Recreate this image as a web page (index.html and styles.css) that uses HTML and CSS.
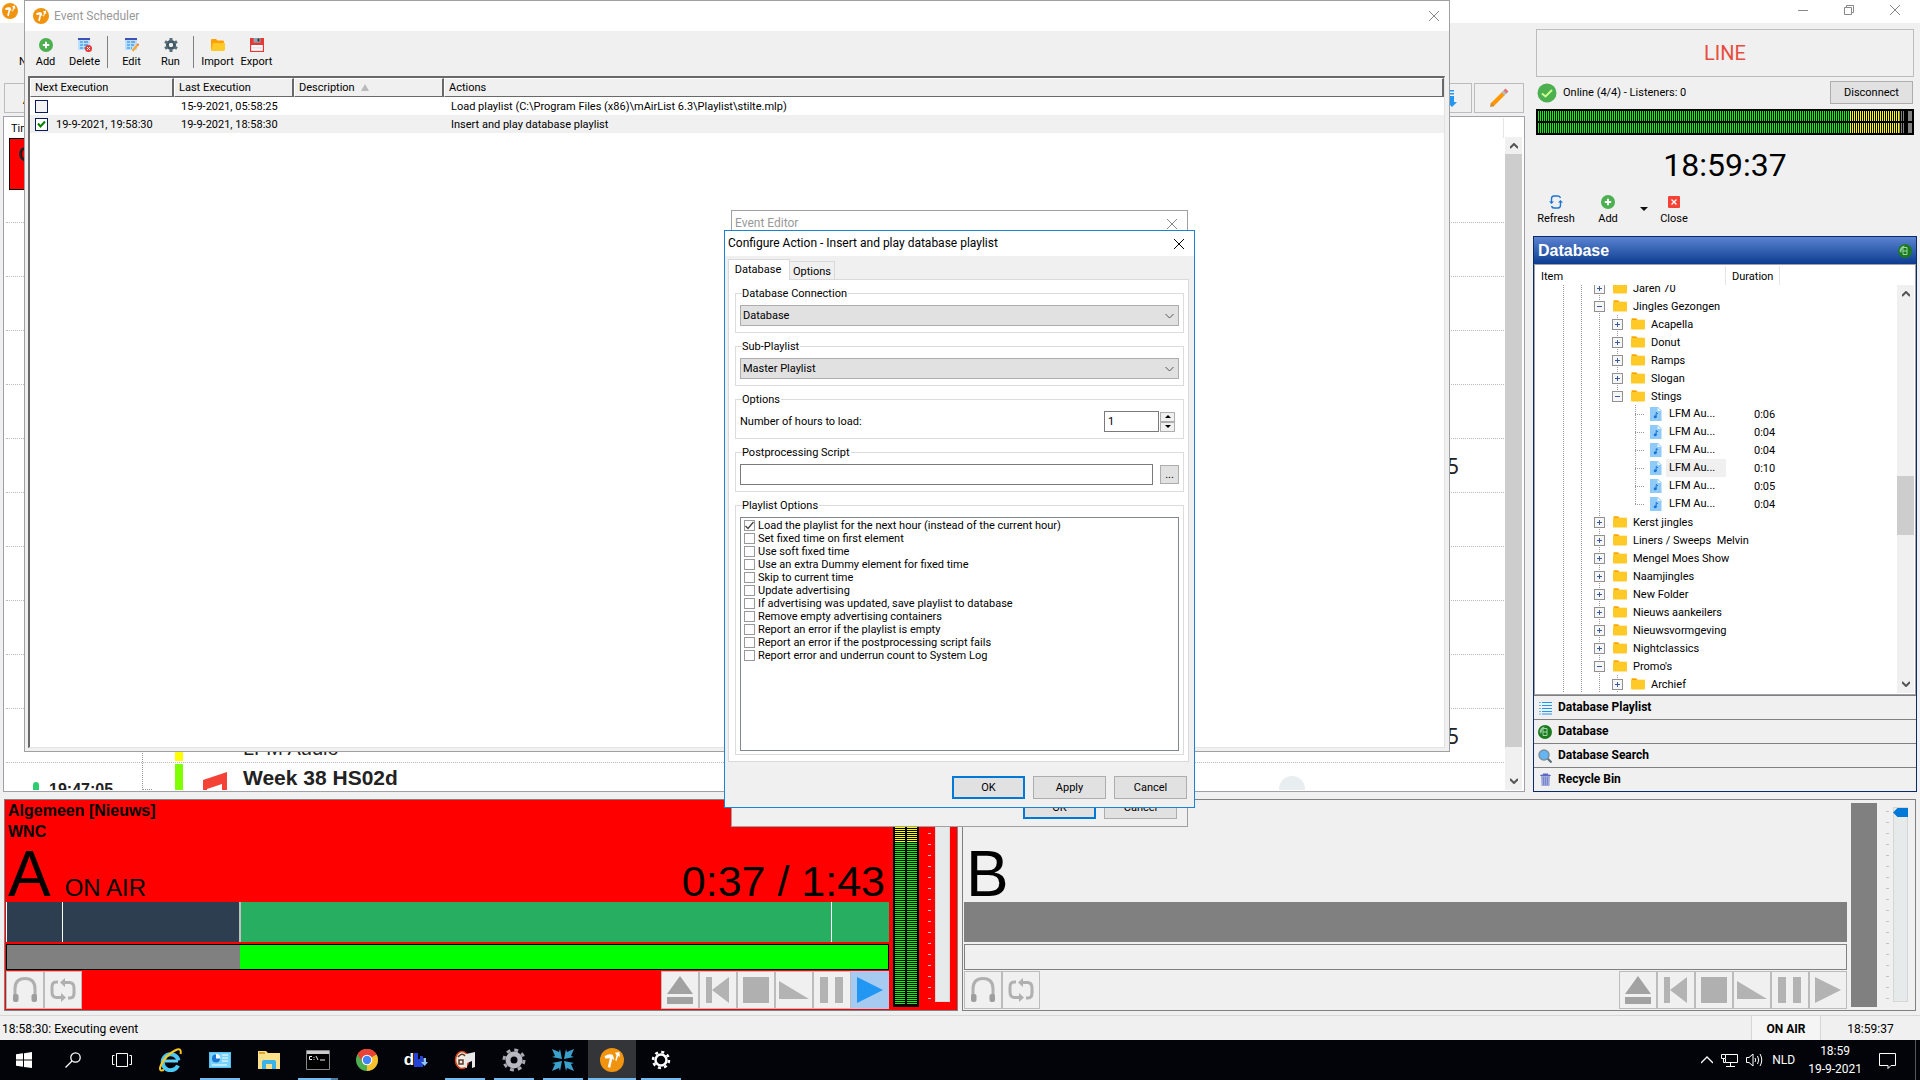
FILE: index.html
```html
<!DOCTYPE html>
<html lang="en">
<head>
    <meta charset="UTF-8">
    <title>mAirList</title>
    <link rel="stylesheet" href="styles.css">
</head>
<body>
<svg class="sprite" aria-hidden="true">
    <symbol id="logo" viewBox="0 0 16 16">
        <circle cx="8" cy="8" r="8" fill="#f0930f"/>
        <path d="M3 5.5Q6 3.5 8.6 4.6L9.6 8.2 8.2 7.2 6.8 13.2 5.2 12.6 6.6 6.8 3.6 7z" fill="#fff"/>
        <path d="M10 3.2L13 2.6 13.2 6 12 5.4 11 8.6 10.2 8.2 11 4.8z" fill="#fff"/>
    </symbol>
    <symbol id="close" viewBox="0 0 12 12"><path d="M1 1L11 11M11 1L1 11" fill="none" stroke="currentColor"/></symbol>
    <symbol id="plus" viewBox="0 0 14 14">
        <circle cx="7" cy="7" r="7" fill="#4caf50"/>
        <path d="M7 3.8V10.2M3.8 7H10.2" stroke="#fff" stroke-width="2"/>
    </symbol>
    <symbol id="list-del" viewBox="0 0 14 14">
        <path d="M0 0H12V12H0z" fill="#bbdefb"/><path d="M0 0H12V2H0z" fill="#3f51b5"/>
        <path d="M2 4H5M2 7H5M2 10H5" stroke="#64b5f6" stroke-width="2"/>
        <path d="M6 4H10M6 7H10M6 10H8" stroke="#1976d2"/>
        <circle cx="10.5" cy="10.5" r="3.5" fill="#e53935"/>
        <path d="M9 9L12 12M12 9L9 12" stroke="#fff"/>
    </symbol>
    <symbol id="list-edit" viewBox="0 0 14 14">
        <path d="M0 0H12V12H0z" fill="#bbdefb"/><path d="M0 0H12V2H0z" fill="#3f51b5"/>
        <path d="M2 4H5M2 7H5M2 10H5" stroke="#64b5f6" stroke-width="2"/>
        <path d="M6 4H10M6 7H9M6 10H7" stroke="#1976d2"/>
        <path d="M7.5 13L13 6.5" stroke="#ffa726" stroke-width="2"/><path d="M12.4 7.2L13.6 5.8" stroke="#e57373" stroke-width="2"/>
    </symbol>
    <symbol id="gear" viewBox="0 0 14 14">
        <circle cx="7" cy="7" r="3.6" fill="none" stroke="#455a64" stroke-width="3"/>
        <path d="M7 0V3M7 11V14M1 3.5L3.5 5M10.5 9L13 10.5M1 10.5L3.5 9M10.5 5L13 3.5" stroke="#546e7a" stroke-width="3"/>
        <circle cx="7" cy="7" r="2" fill="#eceff1"/>
    </symbol>
    <symbol id="folder-open" viewBox="0 0 14 12">
        <path d="M0 1Q0 0 1 0H5L6.5 1.5H12Q13 1.5 13 3V11H0z" fill="#ffa000"/>
        <path d="M2 4H14V10Q14 12 12 12H1Q0 12 0 11z" fill="#ffca28"/>
    </symbol>
    <symbol id="folder" viewBox="0 0 14 12">
        <path d="M0 0H5L6.5 1.5H14V6H0z" fill="#ffe082"/><path d="M1 .5H5L6.5 2H1z" fill="#ffa000"/>
        <rect y="2" width="14" height="9.5" rx="1" fill="#ffca28"/>
    </symbol>
    <symbol id="disk" viewBox="0 0 12 12">
        <path d="M0 0H12V12H0z" fill="#e53935"/><path d="M3 0H9V4H3z" fill="#90a4ae"/>
        <path d="M6.5 .5H8V3H6.5z" fill="#263238"/><path d="M1 6H11V11H1z" fill="#fff"/>
        <path d="M2 8.5H10" stroke="#ddd"/>
    </symbol>
    <symbol id="file" viewBox="0 0 12 14">
        <path d="M0 0H8L11.5 3.5V14H0z" fill="#90caf9"/><path d="M7.5 .5L11 4H7.5z" fill="#e1f5fe"/>
        <circle cx="5.2" cy="9.8" r="1.5" fill="#1976d2"/><path d="M6.2 10V5.5L8 6.8" stroke="#1976d2" fill="none"/>
    </symbol>
    <symbol id="refresh" viewBox="0 0 14 14">
        <path d="M2.5 7V4Q2.500 1 5 1H9Q11 1 11.400 3M11.500 7V10Q11.500 13 9 13H5Q3 13 2.600 11" fill="none" stroke="#1976d2" stroke-width="1.4"/>
        <path d="M0 6.5H5L2.500 9zM9 7.500H14L11.500 5z" fill="#1976d2"/>
    </symbol>
    <symbol id="db" viewBox="0 0 14 14">
        <circle cx="7" cy="7" r="7" fill="#1b7a1f"/><path d="M1.5 7Q2 2 7 1.4Q4 4 3 9z" fill="#8fc79a"/>
        <path d="M5 3.5H9V10.5H5zM5 7H9" fill="none" stroke="#9fd8a4"/>
    </symbol>
    <symbol id="chev-up" viewBox="0 0 8 6"><path d="M0 5L4 1 8 5" fill="none" stroke="#555" stroke-width="2"/></symbol>
    <symbol id="chev-down" viewBox="0 0 8 6"><path d="M0 1L4 5 8 1" fill="none" stroke="#555" stroke-width="2"/></symbol>
    <symbol id="phones" viewBox="0 0 24 26">
        <path d="M2 19V12Q2 1.5 12 1.5T22 12V19" fill="none" stroke="#b0b0b0" stroke-width="3"/>
        <rect x="0" y="17" width="5.5" height="8" rx="2" fill="#9e9e9e"/><rect x="18.500" y="17" width="5.500" height="8" rx="2" fill="#9e9e9e"/>
    </symbol>
    <symbol id="loop" viewBox="0 0 26 24">
        <path d="M8 4H6Q2 4 2 9V14Q2 19 6 19.500H12M18 20H20Q24 20 24 15V10Q24 5 20 4.500H14" fill="none" stroke="#b0b0b0" stroke-width="3"/>
        <path d="M15 0V9L10 4.500zM11 15V24L16 19.500z" fill="#b0b0b0"/>
    </symbol>
    <symbol id="eject" viewBox="0 0 26 28"><path d="M13 0L26 18H0zM0 21H26V28H0z" fill="#a2a2a2"/></symbol>
    <symbol id="prev" viewBox="0 0 26 26"><path d="M1 0H7V26H1zM7 13L24 0V26z" fill="#b3b3b3"/></symbol>
    <symbol id="stop" viewBox="0 0 26 26"><path d="M0 0H26V26H0z" fill="#b0b0b0"/></symbol>
    <symbol id="fade" viewBox="0 0 30 18"><path d="M0 0L30 18H0z" fill="#b3b3b3"/></symbol>
    <symbol id="pause" viewBox="0 0 26 26"><path d="M1 0H9V26H1zM16 0H24V26H16z" fill="#b3b3b3"/></symbol>
    <symbol id="play" viewBox="0 0 26 26"><path d="M0 0L26 13 0 26z" fill="currentColor"/></symbol>
</svg>

<header class="titlebar">
    <svg class="app-logo"><use href="#logo"/></svg>
    <button class="cap-btn" aria-label="Minimize"><svg width="12" height="12"><path d="M1 6.500H11" stroke="#888"/></svg></button>
    <button class="cap-btn" aria-label="Restore"><svg width="12" height="12" fill="none" stroke="#888"><path d="M1.500 3.500H8.500V10.500H1.500zM3.500 3V1.500H10.500V8.500H9"/></svg></button>
    <button class="cap-btn" aria-label="Close"><svg width="12" height="12"><use href="#close"/></svg></button>
</header>

<main class="workspace">
    <section class="left">
        <div class="main-tools"><button class="plain">N</button></div>
        <div class="page-tools">
            <button class="wide">A</button>
            <button aria-label="Move down">
                <svg width="20" height="20"><path d="M13 2H17V3.500H13zM13 5H17V6.500H13zM13 8H17V14H20L15 19 10 14H13z" fill="#2196f3"/></svg>
            </button>
            <button aria-label="Edit">
                <svg width="20" height="20"><path d="M3 17L15 5" stroke="#ff9800" stroke-width="4"/><path d="M14 6L17 3" stroke="#b0bec5" stroke-width="4"/><path d="M16 4L18 2" stroke="#e57373" stroke-width="4"/><path d="M1 19L2 14.500 5.500 18z" fill="#c98a3a"/></svg>
            </button>
        </div>
        <div class="playlist">
            <div class="pl-body">
                <div class="pl-head"><span>Time</span></div>
                <div class="pl-rows">
                    <div class="pl-row first"><div class="current">C</div></div>
                    <div class="pl-row"></div>
                    <div class="pl-row"></div>
                    <div class="pl-row"></div>
                    <div class="pl-row"></div>
                    <div class="pl-row"><span class="pl-dur">5</span></div>
                    <div class="pl-row"></div>
                    <div class="pl-row"></div>
                    <div class="pl-row"></div>
                    <div class="pl-row"></div>
                    <div class="pl-row">
                        <span class="pl-time"></span>
                        <span class="pl-branch"></span>
                        <span class="pl-color yellow"></span>
                        <span class="pl-icon"></span>
                        <span class="pl-title"><b></b><i>LFM Audio</i></span>
                        <span class="pl-dur">5</span>
                    </div>
                    <div class="pl-row">
                        <span class="pl-time"><i class="pin"></i>19:47:05</span>
                        <span class="pl-branch end"></span>
                        <span class="pl-color lime"></span>
                        <span class="pl-icon"><svg width="24" height="34"><path d="M0 9L24 1V30H19V13L4 18V34H0z" fill="#f44336"/></svg></span>
                        <span class="pl-title"><b>Week 38 HS02d</b></span>
                        <span class="pl-disc"></span>
                    </div>
                </div>
            </div>
            <div class="scroll pl-scroll">
                <svg><use href="#chev-up"/></svg>
                <i class="thumb"></i>
                <svg><use href="#chev-down"/></svg>
            </div>
        </div>
    </section>

    <aside class="right">
        <div class="line-box">LINE</div>
        <div class="online">
            <svg width="20" height="20"><circle cx="10" cy="10" r="9.500" fill="#4caf50"/><path d="M5 10.500L8.500 13.500 15 7" fill="none" stroke="#ccff90" stroke-width="2"/></svg>
            <span>Online (4/4) - Listeners: 0</span>
            <button class="btn">Disconnect</button>
        </div>
        <div class="level">
            <div class="level-row"><i class="g" style="width:83.500%"></i><i class="y" style="width:13%"></i><i class="w"></i><i class="clip"></i></div>
            <div class="level-row"><i class="g" style="width:83.500%"></i><i class="y" style="width:13%"></i><i class="w"></i><i class="clip"></i></div>
        </div>
        <div class="clock">18:59:37</div>
        <div class="db-tools">
            <button class="tool"><svg><use href="#refresh"/></svg>Refresh</button>
            <button class="tool"><svg><use href="#plus"/></svg>Add</button>
            <button class="drop" aria-label="Add menu"><svg width="8" height="4"><path d="M0 0H8L4 4z" fill="#111"/></svg></button>
            <button class="tool"><svg viewBox="0 0 14 14"><rect x="1" y="1" width="12" height="12" rx="1" fill="#f44336"/><path d="M4.500 4.500L9.500 9.500M9.500 4.500L4.500 9.500" stroke="#fff" stroke-width="1.300"/></svg>Close</button>
        </div>
        <section class="db">
            <h2>Database<svg><use href="#db"/></svg></h2>
            <div class="tree">
                <div class="tree-head"><span>Item</span><span>Duration</span></div>
                <div class="tree-view">
                    <div class="tree-clip">
                    <table>
                        <tr><td><div class="node"><i></i><i class="v"></i><i class="v"></i><i class="v box plus"></i><svg><use href="#folder"/></svg>Jaren 70</div></td><td></td></tr>
                        <tr><td><div class="node"><i></i><i class="v"></i><i class="v"></i><i class="v box"></i><svg><use href="#folder"/></svg>Jingles Gezongen</div></td><td></td></tr>
                        <tr><td><div class="node"><i></i><i class="v"></i><i class="v"></i><i class="v"></i><i class="v box plus"></i><svg><use href="#folder"/></svg>Acapella</div></td><td></td></tr>
                        <tr><td><div class="node"><i></i><i class="v"></i><i class="v"></i><i class="v"></i><i class="v box plus"></i><svg><use href="#folder"/></svg>Donut</div></td><td></td></tr>
                        <tr><td><div class="node"><i></i><i class="v"></i><i class="v"></i><i class="v"></i><i class="v box plus"></i><svg><use href="#folder"/></svg>Ramps</div></td><td></td></tr>
                        <tr><td><div class="node"><i></i><i class="v"></i><i class="v"></i><i class="v"></i><i class="v box plus"></i><svg><use href="#folder"/></svg>Slogan</div></td><td></td></tr>
                        <tr><td><div class="node"><i></i><i class="v"></i><i class="v"></i><i class="v"></i><i class="v last box"></i><svg><use href="#folder"/></svg>Stings</div></td><td></td></tr>
                        <tr><td><div class="node"><i></i><i class="v"></i><i class="v"></i><i class="v"></i><i></i><i class="v leaf"></i><svg class="f"><use href="#file"/></svg><span>LFM Au...</span></div></td><td>0:06</td></tr>
                        <tr><td><div class="node"><i></i><i class="v"></i><i class="v"></i><i class="v"></i><i></i><i class="v leaf"></i><svg class="f"><use href="#file"/></svg><span>LFM Au...</span></div></td><td>0:04</td></tr>
                        <tr><td><div class="node"><i></i><i class="v"></i><i class="v"></i><i class="v"></i><i></i><i class="v leaf"></i><svg class="f"><use href="#file"/></svg><span>LFM Au...</span></div></td><td>0:04</td></tr>
                        <tr><td><div class="node"><i></i><i class="v"></i><i class="v"></i><i class="v"></i><i></i><i class="v leaf"></i><svg class="f"><use href="#file"/></svg><span class="sel">LFM Au...</span></div></td><td>0:10</td></tr>
                        <tr><td><div class="node"><i></i><i class="v"></i><i class="v"></i><i class="v"></i><i></i><i class="v leaf"></i><svg class="f"><use href="#file"/></svg><span>LFM Au...</span></div></td><td>0:05</td></tr>
                        <tr><td><div class="node"><i></i><i class="v"></i><i class="v"></i><i class="v"></i><i></i><i class="v leaf last"></i><svg class="f"><use href="#file"/></svg><span>LFM Au...</span></div></td><td>0:04</td></tr>
                        <tr><td><div class="node"><i></i><i class="v"></i><i class="v"></i><i class="v box plus"></i><svg><use href="#folder"/></svg>Kerst jingles</div></td><td></td></tr>
                        <tr><td><div class="node"><i></i><i class="v"></i><i class="v"></i><i class="v box plus"></i><svg><use href="#folder"/></svg>Liners / Sweeps&nbsp; Melvin</div></td><td></td></tr>
                        <tr><td><div class="node"><i></i><i class="v"></i><i class="v"></i><i class="v box plus"></i><svg><use href="#folder"/></svg>Mengel Moes Show</div></td><td></td></tr>
                        <tr><td><div class="node"><i></i><i class="v"></i><i class="v"></i><i class="v box plus"></i><svg><use href="#folder"/></svg>Naamjingles</div></td><td></td></tr>
                        <tr><td><div class="node"><i></i><i class="v"></i><i class="v"></i><i class="v box plus"></i><svg><use href="#folder"/></svg>New Folder</div></td><td></td></tr>
                        <tr><td><div class="node"><i></i><i class="v"></i><i class="v"></i><i class="v box plus"></i><svg><use href="#folder"/></svg>Nieuws aankeilers</div></td><td></td></tr>
                        <tr><td><div class="node"><i></i><i class="v"></i><i class="v"></i><i class="v box plus"></i><svg><use href="#folder"/></svg>Nieuwsvormgeving</div></td><td></td></tr>
                        <tr><td><div class="node"><i></i><i class="v"></i><i class="v"></i><i class="v box plus"></i><svg><use href="#folder"/></svg>Nightclassics</div></td><td></td></tr>
                        <tr><td><div class="node"><i></i><i class="v"></i><i class="v"></i><i class="v box"></i><svg><use href="#folder"/></svg>Promo's</div></td><td></td></tr>
                        <tr><td><div class="node"><i></i><i class="v"></i><i class="v"></i><i class="v"></i><i class="v box plus"></i><svg><use href="#folder"/></svg>Archief</div></td><td></td></tr>
                    </table>
                    </div>
                    <div class="scroll">
                        <svg><use href="#chev-up"/></svg>
                        <i class="thumb"></i>
                        <svg><use href="#chev-down"/></svg>
                    </div>
                </div>
            </div>
            <button class="sect"><svg viewBox="0 0 14 14"><path d="M4 1.500H14M4 4.500H14M4 7.500H14M4 10.500H14M4 13H14" stroke="#2196f3"/><path d="M1 1.500H3M1 4.500H3M1 7.500H3M1 10.500H3M1 13H3" stroke="#64b5f6"/></svg>Database Playlist</button>
            <button class="sect"><svg><use href="#db"/></svg>Database</button>
            <button class="sect"><svg viewBox="0 0 14 14"><path d="M9 9L13.500 13.500" stroke="#546e7a" stroke-width="2"/><circle cx="6" cy="6" r="5" fill="#64b5f6" stroke="#78909c" stroke-width="1.500"/></svg>Database Search</button>
            <button class="sect"><svg viewBox="0 0 14 14"><path d="M3 3H12L11.500 13H3.500z" fill="#9fa8da"/><path d="M2 3Q2 1.500 4 1.500H5V.5H10V1.500H11Q13 1.500 13 3z" fill="#5c6bc0"/><path d="M5.500 4V12M7.500 4V12M9.500 4V12" stroke="#7986cb"/></svg>Recycle Bin</button>
        </section>
    </aside>
</main>

<div class="decks">
    <section class="deck on-air">
        <div class="deck-main">
            <div class="deck-title">Algemeen [Nieuws]<br>WNC</div>
            <div class="deck-state"><span class="letter">A</span><span class="state">ON AIR</span><span class="time">0:37 / 1:43</span></div>
            <div class="cue">
                <i class="mark" style="width:6.300%"></i><i class="mark" style="width:20.100%"></i><i class="mark played" style="width:67%"></i><i class="mark" style="width:6.600%"></i>
            </div>
            <div class="progress"><i style="width:26.400%"></i></div>
            <div class="deck-btns">
                <button aria-label="Prelisten"><svg width="24" height="26"><use href="#phones"/></svg></button>
                <button aria-label="Loop"><svg width="26" height="24"><use href="#loop"/></svg></button>
                <span class="fill"></span>
                <button aria-label="Eject"><svg width="26" height="28"><use href="#eject"/></svg></button>
                <button aria-label="Previous"><svg width="26" height="26"><use href="#prev"/></svg></button>
                <button aria-label="Stop"><svg width="26" height="26"><use href="#stop"/></svg></button>
                <button aria-label="Fade out"><svg width="30" height="18"><use href="#fade"/></svg></button>
                <button aria-label="Pause"><svg width="26" height="26"><use href="#pause"/></svg></button>
                <button class="active" aria-label="Play"><svg width="26" height="26"><use href="#play"/></svg></button>
            </div>
        </div>
        <div class="vu"><i></i><i></i></div>
        <div class="ticks"></div>
        <input class="fader" type="range" aria-label="Volume A" min="0" max="100" value="100">
    </section>
    <section class="deck">
        <div class="deck-main">
            <div class="deck-title"></div>
            <div class="deck-state"><span class="letter">B</span></div>
            <div class="cue"></div>
            <div class="progress"></div>
            <div class="deck-btns">
                <button aria-label="Prelisten"><svg width="24" height="26"><use href="#phones"/></svg></button>
                <button aria-label="Loop"><svg width="26" height="24"><use href="#loop"/></svg></button>
                <span class="fill"></span>
                <button aria-label="Eject"><svg width="26" height="28"><use href="#eject"/></svg></button>
                <button aria-label="Previous"><svg width="26" height="26"><use href="#prev"/></svg></button>
                <button aria-label="Stop"><svg width="26" height="26"><use href="#stop"/></svg></button>
                <button aria-label="Fade out"><svg width="30" height="18"><use href="#fade"/></svg></button>
                <button aria-label="Pause"><svg width="26" height="26"><use href="#pause"/></svg></button>
                <button aria-label="Play"><svg width="26" height="26"><use href="#play"/></svg></button>
            </div>
        </div>
        <div class="vu"></div>
        <div class="ticks"></div>
        <input class="fader" type="range" aria-label="Volume B" min="0" max="100" value="100">
    </section>
</div>

<footer class="status"><span class="msg">18:58:30: Executing event</span><b>ON AIR</b><span class="now">18:59:37</span></footer>

<nav class="taskbar">
    <button aria-label="Start"><svg width="16" height="16"><path d="M0 2.300L7 1.300V7.600H0zM8 1.200L16 0V7.600H8zM0 8.500H7V14.800L0 13.800zM8 8.500H16V16L8 14.900z" fill="#fff"/></svg></button>
    <button aria-label="Search"><svg width="16" height="16" fill="none" stroke="#fff" stroke-width="1.300"><circle cx="10.500" cy="5.500" r="4.700"/><path d="M7 9L.5 15.500"/></svg></button>
    <button class="tv" aria-label="Task view"><svg width="20" height="14" fill="none" stroke="#fff"><path d="M4.500 .5H15.500V13.500H4.500zM2.500 2.500H.5V11.500H2.500M17.500 2.500H19.500V11.500H17.500"/></svg></button>
    <button aria-label="Internet Explorer"><svg width="24" height="24"><path d="M5 13H19" stroke="#62d2fa" stroke-width="3"/><path d="M19 17.500A8 8 0 1 1 19.500 12.500" fill="none" stroke="#4cc8f5" stroke-width="4"/><path d="M5 22Q-1 24 2 17 7 7 16 2.500 23-1 21.500 6" fill="none" stroke="#fbc91d" stroke-width="2"/></svg></button>
    <button class="run" aria-label="Control panel"><svg width="22" height="16"><path d="M0 0H22V16H0z" fill="#4fc3f7"/><path d="M1 1H21V15H1z" fill="#79d2fa"/><circle cx="7" cy="6.500" r="4" fill="#1976d2"/><path d="M7 6.500V2A4.500 4.500 0 0 1 11.500 6.500z" fill="#fff"/><path d="M13 3H19M13 6H19M13 9H19M3 13H18" stroke="#fff"/></svg></button>
    <button aria-label="Explorer"><svg width="22" height="20"><path d="M0 1H8L10 3H22V19H0z" fill="#fbe08c"/><path d="M1 2H7V4H1z" fill="#e2a52e"/><path d="M4 19V12Q4 10 6 10H16Q18 10 18 12V19H14V14H8V19z" fill="#39b3e8"/></svg></button>
    <button class="run multi" aria-label="Command prompt"><svg width="24" height="20"><path d="M.5 .5H23.500V19.500H.5z" fill="#000" stroke="#888"/><path d="M1 1H23V4H1z" fill="#ccc"/><path d="M6 6.500H3.500V9.500H6M8 7V7.800M8 9V9.800M10 6L12 10M14 10H19" stroke="#eee" fill="none"/></svg></button>
    <button aria-label="Chrome"><svg width="22" height="22"><circle cx="11" cy="11" r="11" fill="#4caf50"/><path d="M11 11L1.500 5.500A11 11 0 0 1 20.500 5.500z" fill="#ea4335"/><path d="M11 11L20.500 5.500A11 11 0 0 1 11 22z" fill="#fbc02d"/><path d="M11 6H20.700A11 11 0 0 0 1.500 5.500L6.500 13z" fill="#ea4335"/><circle cx="11" cy="11" r="5.300" fill="#fff"/><circle cx="11" cy="11" r="4.200" fill="#4285f4"/></svg></button>
    <button class="dl" aria-label="Downloader"><b>d</b><svg width="14" height="14"><path d="M0 0H4V6H6V3H9V14H0z" fill="#2444d8"/><path d="M9.500 5H12V9H14L10.700 13 7 9H9.500z" fill="#8fc7ff"/></svg></button>
    <button class="run" aria-label="Editor"><svg width="22" height="20"><ellipse cx="8" cy="10" rx="6.500" ry="8.500" fill="#f3ece6" stroke="#d84315" stroke-width="1.500"/><path d="M4 7Q8 2 11 6M5 10H9V14H5z" fill="none" stroke="#5d3a2a" stroke-width="1.500"/><path d="M12 4L21 2V17L18 18V11L13 13V18L10 17z" fill="#e8e8e8"/></svg></button>
    <button class="run" aria-label="Service"><svg width="24" height="24"><circle cx="12" cy="12" r="6" fill="none" stroke="#b8b8c0" stroke-width="5"/><circle cx="12" cy="12" r="10" fill="none" stroke="#a8a8b0" stroke-width="3" stroke-dasharray="3.900 3.950"/></svg></button>
    <button class="run" aria-label="Remote"><svg width="24" height="24"><path d="M1 1L8 4 9 1 11 11 1 9 4 8zM23 1L16 4 15 1 13 11 23 9 20 8zM1 23L8 20 9 23 11 13 1 15 4 16zM23 23L16 20 15 23 13 13 23 15 20 16z" fill="#3aa0cc"/></svg></button>
    <button class="run front" aria-label="mAirList"><svg width="24" height="24"><use href="#logo"/></svg></button>
    <button class="run" aria-label="Settings"><svg width="20" height="20"><circle cx="10" cy="10" r="5.500" fill="none" stroke="#fff" stroke-width="2.500"/><circle cx="10" cy="10" r="8" fill="none" stroke="#fff" stroke-width="2.500" stroke-dasharray="3 3.280"/></svg></button>
    <span class="fill"></span>
    <div class="tray">
        <svg width="12" height="8"><path d="M0 7L6 1 12 7" fill="none" stroke="#fff" stroke-width="1.300"/></svg>
        <svg width="17" height="14" fill="none" stroke="#fff"><path d="M4.500 1.500H16.500V9.500H4.500V6M9.500 10V13M5 13.500H14M.5 1.500H4.500V5.500H.5zM2.500 6V9.500H4"/></svg>
        <svg width="18" height="14" fill="none" stroke="#fff"><path d="M.5 4.500H3L7 1V13L3 9.500H.5zM9 5Q10.500 7 9 9M11.500 3Q14 7 11.500 11M14 1Q17.500 7 14 13"/></svg>
        <span>NLD</span>
    </div>
    <div class="date">18:59<br>19-9-2021</div>
    <button class="note" aria-label="Notifications"><svg width="17" height="17"><path d="M.5 1.500H16.500V13.500H12L9 16.500V13.500H.5z" fill="none" stroke="#fff"/></svg></button>
</nav>

<!-- event scheduler window -->
<section class="win scheduler">
    <header><svg class="logo"><use href="#logo"/></svg><span>Event Scheduler</span><button class="x" aria-label="Close"><svg><use href="#close"/></svg></button></header>
    <div class="sch-tools">
        <button class="tool"><svg><use href="#plus"/></svg>Add</button>
        <button class="tool"><svg><use href="#list-del"/></svg>Delete</button>
        <hr>
        <button class="tool"><svg><use href="#list-edit"/></svg>Edit</button>
        <button class="tool"><svg><use href="#gear"/></svg>Run</button>
        <hr>
        <button class="tool"><svg><use href="#folder-open"/></svg>Import</button>
        <button class="tool"><svg><use href="#disk"/></svg>Export</button>
    </div>
    <div class="events">
        <table>
            <colgroup><col class="c1"><col class="c2"><col class="c3"><col></colgroup>
            <thead>
                <tr><th>Next Execution</th><th>Last Execution</th><th>Description <svg class="sort" width="8" height="7"><path d="M4 0L8 7H0z" fill="#bbb"/></svg></th><th>Actions</th></tr>
            </thead>
            <tbody>
                <tr><td><input type="checkbox" aria-label="Load playlist enabled"></td><td>15-9-2021, 05:58:25</td><td></td><td>Load playlist (C:\Program Files (x86)\mAirList 6.3\Playlist\stilte.mlp)</td></tr>
                <tr class="sel"><td><label><input type="checkbox" checked>19-9-2021, 19:58:30</label></td><td>19-9-2021, 18:58:30</td><td></td><td>Insert and play database playlist</td></tr>
            </tbody>
        </table>
    </div>
</section>

<section class="win editor">
    <header><span>Event Editor</span><button class="x" aria-label="Close"><svg><use href="#close"/></svg></button></header>
    <div class="win-btns"><button class="btn default">OK</button><button class="btn">Cancel</button></div>
</section>

<section class="win config">
    <header><span>Configure Action - Insert and play database playlist</span><button class="x" aria-label="Close"><svg><use href="#close"/></svg></button></header>
    <div class="tabs"><button class="on">Database</button><button>Options</button></div>
    <div class="tab-page">
        <fieldset>
            <legend><label for="conn">Database Connection</label></legend>
            <select id="conn"><option>Database</option></select>
        </fieldset>
        <fieldset>
            <legend><label for="sub">Sub-Playlist</label></legend>
            <select id="sub"><option>Master Playlist</option></select>
        </fieldset>
        <fieldset>
            <legend>Options</legend>
            <div class="line">
                <label for="hours">Number of hours to load:</label>
                <input id="hours" type="text" value="1">
                <div class="spin">
                    <button aria-label="Up"><svg width="6" height="3"><path d="M0 3L3 0 6 3z"/></svg></button>
                    <button aria-label="Down"><svg width="6" height="3"><path d="M0 0H6L3 3z"/></svg></button>
                </div>
            </div>
        </fieldset>
        <fieldset>
            <legend><label for="script">Postprocessing Script</label></legend>
            <div class="line script"><input id="script" type="text"><button class="btn dots">...</button></div>
        </fieldset>
        <fieldset class="grow">
            <legend>Playlist Options</legend>
            <div class="checks">
                <label><input type="checkbox" checked>Load the playlist for the next hour (instead of the current hour)</label>
                <label><input type="checkbox">Set fixed time on first element</label>
                <label><input type="checkbox">Use soft fixed time</label>
                <label><input type="checkbox">Use an extra Dummy element for fixed time</label>
                <label><input type="checkbox">Skip to current time</label>
                <label><input type="checkbox">Update advertising</label>
                <label><input type="checkbox">If advertising was updated, save playlist to database</label>
                <label><input type="checkbox">Remove empty advertising containers</label>
                <label><input type="checkbox">Report an error if the playlist is empty</label>
                <label><input type="checkbox">Report an error if the postprocessing script fails</label>
                <label><input type="checkbox">Report error and underrun count to System Log</label>
            </div>
        </fieldset>
    </div>
    <div class="win-btns"><button class="btn default">OK</button><button class="btn">Apply</button><button class="btn">Cancel</button></div>
</section>
</body>
</html>
```

FILE: styles.css
```css
* {
    box-sizing: border-box;
    margin: 0;
    padding: 0;
}

body {
    display: flex;
    flex-direction: column;
    height: 100vh;
    overflow: hidden;
    background: #f0f0f0;
    color: #000;
    font: 11px/13px Roboto, "Noto Sans", sans-serif;
    position: relative;
}

button, input, select {
    font: inherit;
    color: inherit;
    border: 0;
    background: none;
    border-radius: 0;
}

svg {
    display: block;
    flex: none;
}

.sprite {
    position: absolute;
    width: 0;
    height: 0;
}

.fill {
    flex: 1;
}

/* main window */
.titlebar {
    display: flex;
    align-items: flex-start;
    justify-content: flex-end;
    height: 23px;
    padding: 0 2px;
    background: #fff;
}

.app-logo {
    width: 16px;
    height: 16px;
    margin: 3px auto 0 0;
}

.cap-btn {
    display: flex;
    width: 46px;
    justify-content: center;
    padding-top: 4px;
    color: #888;
}

.workspace {
    flex: 1;
    min-height: 0;
    display: grid;
    grid-template-columns: minmax(0, 1fr) 384px;
    grid-template-rows: minmax(0, 1fr);
    gap: 8px;
    padding: 0 3px 7px;
}

.left {
    display: flex;
    flex-direction: column;
    min-height: 0;
}

.main-tools {
    height: 60px;
    padding: 32px 16px 0;
}

.page-tools {
    display: flex;
    gap: 2px;
    height: 30px;
    padding: 0 1px;
    margin-bottom: 3px;
}

.page-tools button {
    width: 50px;
    border: 1px solid #bcbcbc;
    display: flex;
    align-items: center;
    justify-content: center;
}

.page-tools .wide {
    flex: 1;
    justify-content: flex-start;
    padding: 4px 18px 0;
    font-weight: bold;
}

.playlist {
    flex: 1;
    min-height: 0;
    display: flex;
    background: #fff;
    border: 1px solid #a0a0a8;
    padding: 1px 2px 1px 2px;
}

.pl-body {
    flex: 1;
    min-width: 0;
    display: flex;
    flex-direction: column;
}

.pl-head {
    height: 20px;
    padding: 4px 5px;
    border-right: 1px solid #e5e5e5;
}

.pl-rows {
    flex: 1;
    min-height: 0;
    overflow: hidden;
    font: 20px/22px "Liberation Sans", Arial, sans-serif;
    color: #222;
}

.pl-row {
    display: flex;
    height: 54px;
    border-bottom: 1px dotted #bbb;
}

.pl-row.first {
    height: 85px;
    padding: 0 3px;
}

.current {
    width: 90%;
    height: 52px;
    padding: 4px 8px;
    background: #f00;
    border: 1px solid #000;
    font-weight: bold;
}

.pl-time {
    width: 136px;
    padding-left: 27px;
    display: flex;
    align-items: center;
    gap: 10px;
    font-size: 16px;
    font-weight: bold;
}

.pin {
    width: 6px;
    height: 16px;
    border-radius: 3px;
    background: #2ecc71;
}

.pl-branch {
    width: 10px;
    border-left: 1px dotted #999;
}

.pl-branch.end {
    height: 27px;
    border-bottom: 1px dotted #999;
}

.pl-color {
    width: 8px;
    margin: 1px 20px 1px 23px;
}

.yellow {
    background: #ff0;
}

.lime {
    background: #80ff00;
}

.pl-icon {
    width: 40px;
    padding-top: 8px;
}

.pl-title {
    flex: 1;
    padding-top: 2px;
}

.pl-title b, .pl-title i {
    display: block;
    font-style: normal;
}

.pl-title b {
    height: 26px;
    font-size: 21px;
    line-height: 26px;
}

.pl-dur {
    margin: 0 45px 0 auto;
    align-self: center;
    font: 21px/24px "Noto Sans", sans-serif;
}

.pl-disc {
    width: 26px;
    height: 26px;
    margin: 13px 199px 0 0;
    border-radius: 50%;
    background: #e8eeef;
}

.scroll {
    width: 17px;
    display: flex;
    flex-direction: column;
    align-items: center;
    padding: 6px 0;
    background: #f0f0f0;
}

.scroll svg {
    width: 8px;
    height: 6px;
}

.scroll .thumb {
    width: 100%;
    background: #cdcdcd;
}

.pl-scroll {
    margin: 19px 0 0 1px;
}

.pl-scroll .thumb {
    flex: 1;
    margin: 5px 0 31px;
}

/* right side */
.right {
    display: flex;
    flex-direction: column;
    min-height: 0;
    padding-top: 6px;
}

.line-box {
    height: 48px;
    margin: 0 3px 4px;
    border: 1px solid #bcbcbc;
    color: #e74c3c;
    font-size: 20px;
    line-height: 46px;
    text-align: center;
}

.online {
    display: flex;
    align-items: center;
    gap: 6px;
    height: 23px;
    margin: 0 4px 5px;
}

.btn {
    width: 73px;
    height: 23px;
    background: #e1e1e1;
    border: 1px solid #adadad;
}

.btn.default {
    border: 2px solid #0078d7;
}

.online .btn {
    width: 83px;
    margin-left: auto;
}

.level {
    display: flex;
    flex-direction: column;
    gap: 2px;
    height: 26px;
    margin: 0 3px;
    padding: 2px;
    background: #000;
}

.level-row {
    flex: 1;
    display: flex;
}

.level-row .g {
    background: repeating-linear-gradient(90deg, #0f0 0 1px, #000 1px 2px);
}

.level-row .y {
    background: repeating-linear-gradient(90deg, #ff0 0 1px, #000 1px 2px);
}

.level-row .w {
    width: 6px;
    background: repeating-linear-gradient(90deg, #808080 0 1px, #000 1px 2px);
}

.level-row .clip {
    width: 4px;
    margin-left: auto;
    background: #808080;
}

.clock {
    margin: 9px 3px;
    font-size: 32px;
    line-height: 42px;
    text-align: center;
}

.tool {
    display: flex;
    flex-direction: column;
    align-items: center;
    gap: 3px;
}

.tool svg {
    width: 14px;
    height: 14px;
}

.db-tools {
    display: flex;
    padding-left: 3px;
    height: 41px;
}

.db-tools .tool {
    width: 40px;
    margin-right: 12px;
}

.db-tools .drop {
    height: 28px;
    width: 10px;
    margin-right: 4px;
}

.db {
    flex: 1;
    min-height: 0;
    display: flex;
    flex-direction: column;
    border: 1px solid #0a2a6c;
}

.db h2 {
    display: flex;
    align-items: center;
    justify-content: space-between;
    height: 27px;
    padding: 0 4px;
    color: #fff;
    font: bold 16px/26px "Liberation Sans", Arial, sans-serif;
    background: linear-gradient(#5b84d2, #0c3c90);
}

.db h2 svg, .sect svg {
    width: 14px;
    height: 14px;
}

.tree {
    flex: 1;
    min-height: 0;
    display: flex;
    flex-direction: column;
    background: #fff;
    border: 1px solid #a0a0a8;
    padding: 1px 1px 1px 1px;
}

.tree-head {
    display: flex;
    height: 19px;
}

.tree-head span {
    padding: 4px 5px;
    width: 190px;
    border-right: 1px solid #e5e5e5;
}

.tree-head span + span {
    width: 54px;
    padding: 4px 6px;
}

.tree-view {
    flex: 1;
    min-height: 0;
    display: flex;
}

.tree-clip {
    flex: 1;
    overflow: hidden;
}

/* list is scrolled to the middle of a row */
.tree table {
    margin-top: -6px;
    border-spacing: 0;
}

.tree td {
    height: 18px;
}

.tree td:first-child {
    width: 190px;
}

.tree td + td {
    padding-left: 28px;
}

.node {
    display: flex;
    align-items: center;
    height: 18px;
    width: 190px;
    white-space: pre;
}

.node > i {
    flex: none;
    width: 18px;
    height: 18px;
    display: flex;
    align-items: center;
    justify-content: center;
}

.node .v {
    background: repeating-linear-gradient(#999 0 1px, transparent 1px 2px) 9px 0 / 1px 18px no-repeat;
}

.node .v.last {
    background-size: 1px 9px;
}

.node .box::before {
    content: "";
    width: 9px;
    height: 9px;
    margin-left: 1px;
    border: 1px solid #919191;
    background: linear-gradient(#3b5aa0, #3b5aa0) center / 5px 1px no-repeat, #f6f6f6;
}

.node .plus::before {
    background: linear-gradient(#3b5aa0, #3b5aa0) center / 5px 1px no-repeat, linear-gradient(#3b5aa0, #3b5aa0) center / 1px 5px no-repeat, #f6f6f6;
}

.node .leaf {
    justify-content: flex-end;
}

.node .leaf::before {
    content: "";
    width: 9px;
    border-top: 1px dotted #999;
}

.node svg {
    width: 14px;
    height: 12px;
    margin: 0 6px 0 5px;
}

.node .f {
    width: 12px;
    height: 14px;
    margin: 0 4px 0 6px;
}

.node span {
    flex: 1;
    padding-left: 3px;
    line-height: 18px;
}

.node .sel {
    background: #f0f0f0;
}

.tree .scroll .thumb {
    height: 59px;
    margin: 179px 0 auto;
}

.sect {
    display: flex;
    align-items: center;
    gap: 6px;
    height: 24px;
    padding: 0 4px;
    border-top: 1px solid #808080;
    font-size: 12px;
    font-weight: bold;
}

/* players */
.decks {
    display: grid;
    grid-template-columns: 1fr 1fr;
    gap: 4px;
    padding: 0 4px 4px;
}

.deck {
    display: flex;
    border: 1px solid #808080;
    padding: 0 7px 1px 1px;
    font-family: "Liberation Sans", Arial, sans-serif;
}

.on-air {
    background: #f00;
}

.deck-main {
    flex: 1;
    min-width: 0;
}

.deck-title {
    height: 42px;
    padding-left: 2px;
    font-size: 16px;
    line-height: 21px;
    font-weight: bold;
}

.deck-state {
    display: flex;
    align-items: baseline;
    gap: 14px;
    height: 60px;
    padding: 0 4px 0 2px;
    line-height: 64px;
}

.letter {
    font-size: 64px;
}

.state {
    font-size: 24px;
}

.time {
    margin-left: auto;
    font-size: 43px;
}

.cue {
    display: flex;
    height: 40px;
    margin-bottom: 2px;
    background: #808080;
}

.on-air .cue {
    background: #27ae60;
}

.mark {
    border-left: 1px solid #fff;
    background: #2c3e50;
}

.mark.played {
    border-left: 2px solid #c0c0c0;
}

.played, .played + .mark {
    background: #27ae60;
}

.progress {
    display: flex;
    height: 26px;
    margin-bottom: 1px;
    border: 1px solid #808080;
}

.on-air .progress {
    border-color: #000;
    background: #0f0;
}

.progress i {
    background: #808080;
}

.deck-btns {
    display: flex;
}

.deck-btns button {
    width: 38px;
    height: 38px;
    display: flex;
    align-items: center;
    justify-content: center;
    border: 1px solid #bcbcbc;
    background: #f0f0f0;
    color: #b3b3b3;
}

.deck-btns .active {
    background: #a6caf0;
    border-color: #a6caf0;
    color: #2196f3;
}

.vu {
    width: 26px;
    margin: 3px 0 2px 4px;
    padding: 2px;
    display: flex;
    gap: 2px;
    background: #808080;
}

.on-air .vu {
    background: #000;
}

.vu i {
    flex: 1;
    background: repeating-linear-gradient(transparent 0 1px, #000 1px 2px), linear-gradient(#ff0 0 37px, #0f0 37px);
}

.ticks {
    width: 3px;
    margin: 11px 4px 9px 9px;
    background: repeating-linear-gradient(#c4c4c4 0 1px, transparent 1px 11px);
}

.fader {
    appearance: none;
    writing-mode: vertical-lr;
    direction: rtl;
    width: 15px;
    height: auto;
    margin: 7px 0;
    background: #e7eaea;
    border: 1px solid #d6d6d6;
}

.fader::-webkit-slider-thumb {
    appearance: none;
    width: 15px;
    height: 9px;
    background: #0078d7;
    clip-path: polygon(0 50%, 30% 0, 100% 0, 100% 100%, 30% 100%);
}

.status {
    display: flex;
    height: 25px;
    border-top: 1px solid #d7d7d7;
    font-size: 12px;
    line-height: 26px;
    text-align: center;
}

.status .msg {
    flex: 1;
    padding-left: 2px;
    text-align: left;
}

.status b {
    width: 70px;
    background: #f5f5f5;
    border: solid #d7d7d7;
    border-width: 0 1px;
}

.status .now {
    width: 99px;
}

/* taskbar */
.taskbar {
    display: flex;
    gap: 1px;
    height: 40px;
    background: #020409;
    color: #fff;
    font-size: 12px;
}

.taskbar button {
    width: 48px;
    display: flex;
    align-items: center;
    justify-content: center;
}

.taskbar .run {
    border: solid #76b9ed;
    border-width: 0 0 2px;
    width: 40px;
    margin: 0 4px;
    padding-top: 2px;
}

.taskbar .multi {
    border-image: linear-gradient(90deg, #76b9ed 80%, #4f7ba0 80%) 2;
}

.taskbar .front {
    width: 48px;
    margin: 0;
    background: #333539;
}

.taskbar .dl b {
    font: bold 17px/20px "Liberation Sans", sans-serif;
}

.tray {
    display: flex;
    align-items: center;
    gap: 8px;
    margin-right: 12px;
}

.date {
    padding-top: 2px;
    line-height: 18px;
    text-align: center;
}

.taskbar .note {
    width: 53px;
    margin-right: 4px;
    padding-right: 4px;
    border-right: 1px solid #555;
}

/* floating windows */
.win {
    position: absolute;
    display: flex;
    flex-direction: column;
    background: #f0f0f0;
    border: 1px solid #a0a0a0;
}

.win header {
    display: flex;
    align-items: center;
    background: #fff;
    color: #999;
    font-size: 12px;
}

.x {
    margin-left: auto;
    color: #888;
}

.x svg {
    width: 12px;
    height: 12px;
}

.scheduler {
    left: 24px;
    top: 0;
    width: 1426px;
    height: 752px;
    padding: 0 4px 3px 3px;
}

.scheduler header {
    height: 30px;
    margin: 0 -4px 0 -3px;
    padding: 0 9px 0 8px;
    gap: 5px;
}

.scheduler .logo {
    width: 16px;
    height: 16px;
}

.sch-tools {
    display: flex;
    height: 45px;
    margin-left: -2px;
    padding-top: 7px;
}

.sch-tools .tool {
    width: 39px;
}

.sch-tools hr {
    height: 32px;
    margin: -2px 4px 0 3px;
    border: 0;
    border-left: 1px solid #808080;
}

.events {
    flex: 1;
    background: #fff;
    border: solid #e3e3e3;
    border-color: #696969 #e3e3e3 #e3e3e3 #696969;
    border-width: 2px 1px 1px 2px;
}

.events table {
    width: 100%;
    table-layout: fixed;
    border-spacing: 0;
}

.c1 {
    width: 144px;
}

.c2 {
    width: 120px;
}

.c3 {
    width: 150px;
}

.events th {
    height: 19px;
    padding-left: 4px;
    text-align: left;
    font-weight: normal;
    background: #f0f0f0;
    border: 1px solid #fff;
    border-right: 2px solid #696969;
    border-bottom: 1px solid #696969;
}

.events .sort {
    display: inline-block;
    margin-left: 4px;
}

.events td {
    height: 18px;
    padding-left: 7px;
}

.events td:first-child {
    padding-left: 5px;
}

.events .sel td {
    background: #f0f0f0;
}

input[type=checkbox] {
    appearance: none;
    flex: none;
    width: 11px;
    height: 11px;
    background-color: #fff;
    border: 1px solid #999;
}

input[type=checkbox]:checked {
    background: url("data:image/svg+xml,%3Csvg xmlns='http://www.w3.org/2000/svg' viewBox='0 0 9 9'%3E%3Cpath d='M.5 5L3 7.500 8.500 1' fill='none' stroke='%23444' stroke-width='1.300'/%3E%3C/svg%3E") center / 9px 9px no-repeat;
}

.events input[type=checkbox] {
    display: block;
    width: 13px;
    height: 13px;
    border-color: #0a1a5c;
    background-color: #f3f3f3;
}

.events input[type=checkbox]:checked {
    background: url("data:image/svg+xml,%3Csvg xmlns='http://www.w3.org/2000/svg' viewBox='0 0 9 9'%3E%3Cpath d='M1 3.500L3.500 6.500 8 1.500' fill='none' stroke='%23008000' stroke-width='2'/%3E%3C/svg%3E") center / 9px 9px no-repeat #fff;
}

.events label {
    display: flex;
    align-items: center;
    gap: 8px;
}

.editor {
    left: 731px;
    top: 210px;
    width: 457px;
    height: 617px;
}

.editor header {
    height: 25px;
    padding: 0 9px 0 3px;
}

.win-btns {
    display: flex;
    justify-content: flex-end;
    gap: 8px;
    margin-top: auto;
    padding: 0 10px 7px;
}

.config {
    left: 724px;
    top: 230px;
    width: 471px;
    height: 578px;
    border-color: #1883d7;
}

.config header {
    height: 25px;
    padding: 0 9px 0 3px;
    color: #000;
}

.config .x {
    color: #000;
}

.tabs {
    display: flex;
    align-items: flex-end;
    padding: 3px 3px 0;
}

.tabs button {
    height: 18px;
    width: 45px;
    padding-top: 1px;
    border: 1px solid #d9d9d9;
    border-width: 1px 1px 0 0;
}

.tabs .on {
    position: relative;
    width: 62px;
    height: 21px;
    margin-bottom: -1px;
    border-width: 1px 1px 0;
    padding: 0 2px 2px 0;
    background: #fff;
}

.tab-page {
    flex: 1;
    display: flex;
    flex-direction: column;
    gap: 7px;
    margin: 0 5px 14px 3px;
    padding: 7px 4px 6px 6px;
    background: #fff;
    border: 1px solid #d9d9d9;
}

fieldset {
    min-width: 0;
    border: 1px solid #dcdcdc;
    padding: 5px 4px 6px;
}

fieldset.grow {
    flex: 1;
    padding-bottom: 3px;
}

legend {
    margin-left: 2px;
    padding-right: 1px;
    line-height: 13px;
}

select {
    display: block;
    width: 100%;
    height: 21px;
    padding: 0 2px;
    appearance: none;
    border: 1px solid #adadad;
    background: url("data:image/svg+xml,%3Csvg xmlns='http://www.w3.org/2000/svg' viewBox='0 0 9 6'%3E%3Cpath d='M.5 1L4.500 5 8.500 1' fill='none' stroke='%23555'/%3E%3C/svg%3E") right 4px center / 9px 6px no-repeat #e1e1e1;
}

.line {
    display: flex;
    align-items: center;
}

.line label {
    margin-right: auto;
}

.line input {
    width: 55px;
    height: 21px;
    padding: 0 3px;
    border: 1px solid #7a7a7a;
    background: #fff;
}

.spin {
    width: 15px;
    margin: 0 4px 0 1px;
}

.spin button {
    display: flex;
    align-items: center;
    justify-content: center;
    width: 15px;
    height: 10px;
    border: 1px solid #adadad;
    background: #f0f0f0;
}

.script {
    gap: 7px;
}

.script input {
    flex: 1;
}

.dots {
    width: 19px;
    height: 19px;
}

.checks {
    height: 100%;
    padding: 1px 3px;
    border: 1px solid #828790;
}

.checks label {
    display: flex;
    align-items: center;
    gap: 3px;
    height: 13px;
}

.config .win-btns {
    padding: 0 7px 8px;
}
```
